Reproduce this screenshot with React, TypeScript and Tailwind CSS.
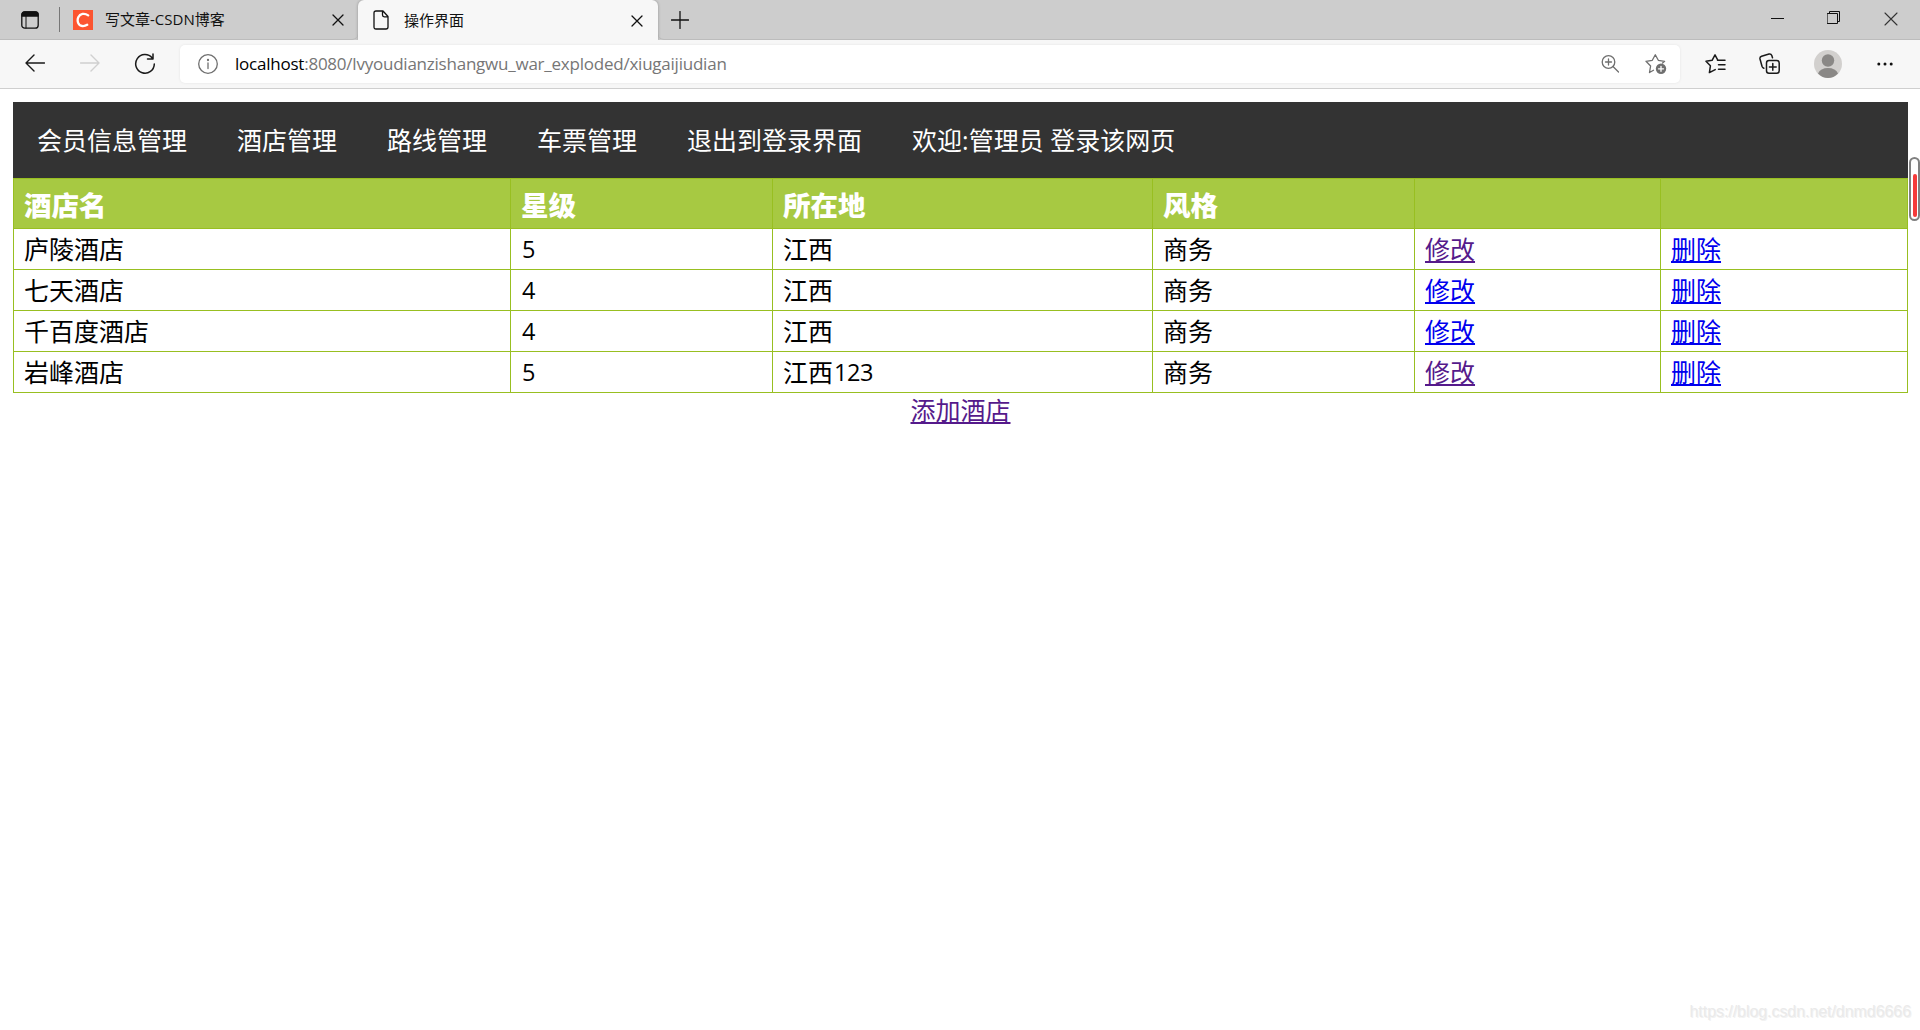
import React from "react";

const navItems = ["会员信息管理", "酒店管理", "路线管理", "车票管理", "退出到登录界面", "欢迎:管理员 登录该网页"];

const hotels = [
  { name: "庐陵酒店", star: "5", place: "江西", no: "", style: "商务", visited: true },
  { name: "七天酒店", star: "4", place: "江西", no: "", style: "商务", visited: false },
  { name: "千百度酒店", star: "4", place: "江西", no: "", style: "商务", visited: false },
  { name: "岩峰酒店", star: "5", place: "江西", no: "123", style: "商务", visited: true },
];

type IconProps = { className?: string; w: number; h: number; children: React.ReactNode };

function Icon({ className = "", w, h, children }: IconProps) {
  return (
    <svg
      width={w}
      height={h}
      viewBox={`0 0 ${w} ${h}`}
      fill="none"
      stroke="currentColor"
      strokeWidth="1.3"
      strokeLinecap="round"
      strokeLinejoin="round"
      className={`shrink-0 ${className}`}
    >
      {children}
    </svg>
  );
}

function TabClose() {
  return (
    <Icon w={12} h={12} className="mt-px">
      <path d="M1 1l10 10M11 1L1 11" />
    </Icon>
  );
}

function TitleBar() {
  return (
    <div className="flex h-10 bg-[#cdcdcd] text-[#111]">
      <div className="flex h-full w-[358px] items-center rounded-br-md border-b border-[#bcbcbc]">
        <Icon w={18} h={18} className="ml-[21px]">
          <rect x="0.8" y="0.8" width="16.4" height="16.4" rx="3" />
          <path d="M1 3.5Q1 1 3.5 1h11Q17 1 17 3.5V5H1z" fill="currentColor" />
          <path d="M5 5v12" strokeWidth="1" />
        </Icon>
        <div className="ml-5 h-[25px] w-px bg-[#777]" />
        <div className="ml-[13px] flex h-5 w-5 items-center justify-center bg-[#fc5531]">
          <svg width="14" height="16" viewBox="0 0 14 16" fill="none" stroke="#fff" strokeWidth="2.3" strokeLinecap="round">
            <path d="M12.2 3.4C8.6.7 4 1.5 2.3 5.2 0.7 9 2.2 13.6 6.2 14c2 .2 3.600-.3 5-1.200" />
          </svg>
        </div>
        <span className="ml-3 w-[227px] text-[15px] whitespace-nowrap">写文章-CSDN博客</span>
        <TabClose />
      </div>
      <div className="flex h-full w-[300px] items-center rounded-t-md bg-[#f7f7f7] shadow-[0_0_3px_rgba(0,0,0,0.3)] [clip-path:inset(0_-4px_0_-4px)]">
        <Icon w={16} h={20} className="ml-[15px]">
          <path d="M3 1h7l5 5.500V17q0 2-2 2H3q-2 0-2-2V3q0-2 2-2zM9.500 1v4q0 1.800 1.800 1.800H15" />
        </Icon>
        <span className="ml-[15px] w-[227px] text-[15px]">操作界面</span>
        <TabClose />
      </div>
      <div className="flex h-full flex-1 items-center rounded-bl-md border-b border-[#bcbcbc]">
        <Icon w={18} h={18} className="ml-[12.5px]">
          <path d="M9 .5v17M.5 9h17" />
        </Icon>
        <Icon w={13} h={13} className="mt-[-3px] ml-auto">
          <path d="M0 6.500h13" strokeWidth="1" />
        </Icon>
        <Icon w={14} h={14} className="mt-[-3px] ml-[43px]">
          <path d="M.5 2.500h10v10H.5zM2.500 2V.5h10v10H11" strokeWidth="1" strokeLinejoin="miter" />
        </Icon>
        <Icon w={14} h={14} className="mt-[-2px] mr-[22px] ml-[43px] text-[#333]">
          <path d="M1 1l12 12M13 1L1 13" strokeWidth="1.100" />
        </Icon>
      </div>
    </div>
  );
}

function ToolBar() {
  return (
    <div className="flex h-[49px] items-center border-b border-[#cfcfcf] bg-[#f7f7f7] text-[#1a1a1a]">
      <Icon w={20} h={18} className="mt-[-2px] ml-[25px]">
        <path d="M9 1L1 9l8 8M1 9h18.500" strokeWidth="1.400" />
      </Icon>
      <Icon w={20} h={18} className="mt-[-2px] ml-[35px] text-[#d0d0d0]">
        <path d="M11 1l8 8-8 8M19 9H.5" strokeWidth="1.400" />
      </Icon>
      <Icon w={22} h={22} className="ml-[34px]">
        <path d="M18.200 5A9.300 9.300 0 1 0 20.300 11M19 1v5h-5.500" strokeWidth="1.500" />
      </Icon>
      <div className="ml-6 flex h-[38px] w-[1500px] items-center rounded-[5px] bg-white text-[#6f6f6f] shadow-[0_0_3px_rgba(0,0,0,0.08)]">
        <Icon w={20} h={20} className="ml-[17.5px]">
          <circle cx="10" cy="10" r="9.300" />
          <path d="M10 9v5.500" />
          <circle cx="10" cy="6" r=".5" fill="currentColor" />
        </Icon>
        <div className="ml-[17.5px] text-[17px] tracking-[-0.23px] whitespace-nowrap text-[#767676]">
          <span className="text-black">localhost</span>:8080/lvyoudianzishangwu_war_exploded/xiugaijiudian
        </div>
        <Icon w={18} h={18} className="ml-auto">
          <circle cx="7.500" cy="7" r="6.300" />
          <path d="M12 11.500l5.500 5.500M7.500 4v6M4.500 7h6" />
        </Icon>
        <Icon w={22} h={20} className="mr-[13px] ml-[26px]">
          <path d="M4.500 18.500L5.600 12 1 7.300l6.300-1L10.300.8l3 5.500 6.300 1-2 1.800M4.500 18.500l4-2.300" />
          <circle cx="16" cy="14.800" r="5.200" fill="currentColor" stroke="none" />
          <path d="M16 12.300v5M13.500 14.800h5" stroke="#fff" />
        </Icon>
      </div>
      <Icon w={21} h={20} className="ml-[24.5px]">
        <path d="M12.800 6.200L10 .9l-2.900 5.400L1 7.300l4.400 4.500-1 6.800 5.800-3M12.500 6.300H20M13.500 10.800H20M13.500 15.200H20" strokeWidth="1.500" />
      </Icon>
      <Icon w={21} h={21} className="mt-[-1px] ml-[33.5px]">
        <rect x="7.500" y="7.500" width="12.700" height="12.700" rx="2.500" strokeWidth="1.500" />
        <path d="M13.800 10.500v6.800M10.400 13.900h6.800M4.800 15.200Q3.500 14.800 3 13.300L1 6Q.6 4 2.600 3.300L10 1Q12 .5 12.800 2.500l.7 2.200" strokeWidth="1.500" />
      </Icon>
      <svg width="28" height="28" viewBox="0 0 28 28" className="ml-[34px] shrink-0">
        <circle cx="14" cy="14" r="14" fill="#d2d0ce" />
        <circle cx="14" cy="10.500" r="6.200" fill="#8a8886" />
        <path d="M4 23.500q2.500-5.500 10-5.500t10 5.500Q19.500 28 14 28T4 23.500z" fill="#8a8886" />
      </svg>
      <svg width="16" height="4" viewBox="0 0 16 4" className="ml-[35px] shrink-0" fill="#111">
        <circle cx="1.800" cy="2" r="1.500" />
        <circle cx="8" cy="2" r="1.500" />
        <circle cx="14.200" cy="2" r="1.500" />
      </svg>
    </div>
  );
}

const cell = "border border-[#98bf21] pt-[3px] pb-0 pl-[10px] h-[41px] leading-[35px] align-top";

function HotelTable() {
  return (
    <table className="w-[1895px] table-fixed border-collapse text-[25px] text-black">
      <colgroup>
        <col className="w-[497px]" />
        <col className="w-[262px]" />
        <col className="w-[380px]" />
        <col className="w-[262px]" />
        <col className="w-[246px]" />
        <col className="w-[247px]" />
      </colgroup>
      <thead>
        <tr className="bg-[#a7c942] text-left text-[27.5px] text-white">
          {["酒店名", "星级", "所在地", "风格", "", ""].map((h, i) => (
            <th key={i} className="h-[50px] border border-[#98bf21] pt-[5px] pb-0 pl-[10px] align-top leading-[44px] font-extrabold">
              {h}
            </th>
          ))}
        </tr>
      </thead>
      <tbody>
        {hotels.map((h) => (
          <tr key={h.name}>
            <td className={cell}>{h.name}</td>
            <td className={cell}>
              <Digits>{h.star}</Digits>
            </td>
            <td className={cell}>
              {h.place}
              <Digits>{h.no}</Digits>
            </td>
            <td className={cell}>{h.style}</td>
            <td className={cell}>
              <a className={h.visited ? "text-[#551a8b] underline" : "text-[#0000ee] underline"}>修改</a>
            </td>
            <td className={cell}>
              <a className="text-[#0000ee] underline">删除</a>
            </td>
          </tr>
        ))}
      </tbody>
    </table>
  );
}

function Digits({ children }: { children: string }) {
  return <span className="pl-px align-[1px] text-[23.5px] leading-none tracking-[-0.5px]">{children}</span>;
}

export default function App() {
  return (
    <div className="relative flex h-[1030px] w-[1920px] flex-col overflow-hidden bg-white font-['Open_Sans','Noto_Sans_CJK_SC',sans-serif]">
      <TitleBar />
      <ToolBar />
      <main className="mt-[13px] ml-[13px] w-[1895px]">
        <nav className="flex h-[76px] items-center gap-[50px] bg-[#333] pt-[2px] pl-6 text-[25px] whitespace-nowrap text-white">
          {navItems.map((n) => (
            <a key={n}>{n}</a>
          ))}
        </nav>
        <HotelTable />
        <div className="text-center leading-[34px]">
          <a className="text-[25px] text-[#551a8b] underline">添加酒店</a>
        </div>
      </main>
      <div className="absolute top-[157px] left-[1909px] flex h-16 w-[11px] items-end justify-center rounded-full border-2 border-[#808080] bg-white pb-0.5">
        <div className="h-[43px] w-1 rounded-full bg-[#f53b3b]" />
      </div>
      <div className="absolute right-[9px] bottom-[6px] font-['Liberation_Sans',sans-serif] text-[16px] tracking-[-0.06px] text-[#eaeaea] [text-shadow:1px_1px_0_#f2f2f2]">
        https://blog.csdn.net/dnmd6666
      </div>
    </div>
  );
}
